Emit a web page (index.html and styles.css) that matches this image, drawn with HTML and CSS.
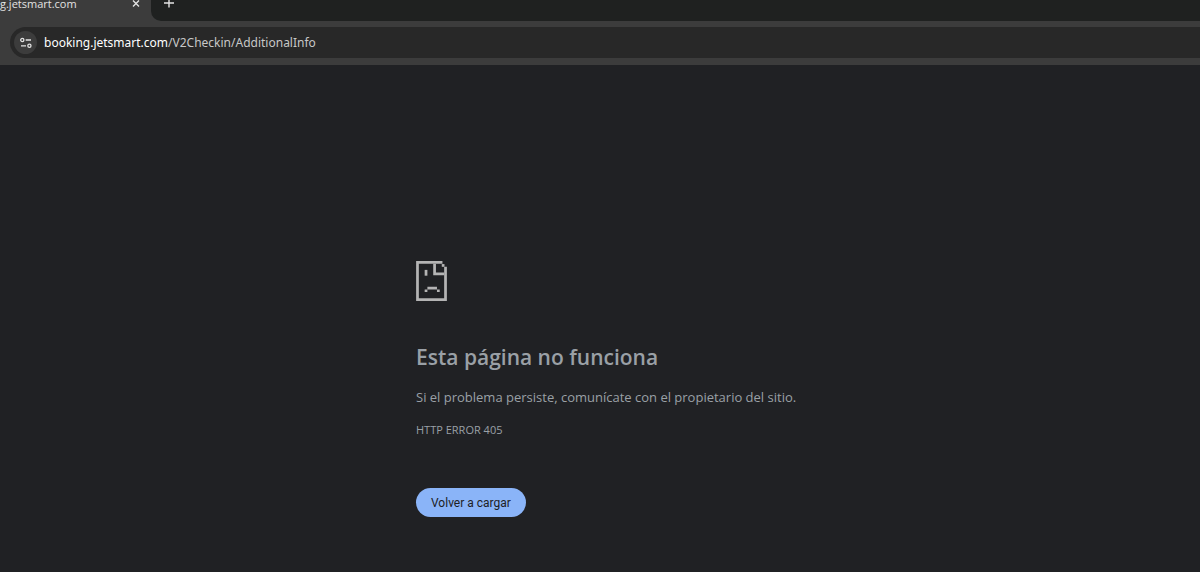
FILE: index.html
```html
<!DOCTYPE html>
<html lang="es">
<head>
  <meta charset="UTF-8">
  <meta name="viewport" content="width=device-width, initial-scale=1">
  <title>booking.jetsmart.com</title>
  <link rel="stylesheet" href="styles.css">
</head>
<body>

<header class="browser">
  <div class="tabs">
    <div class="tab">
      <span class="tab-title">g.jetsmart.com</span>
      <button class="tab-button" type="button" aria-label="Cerrar">
        <svg width="8" height="8" viewBox="0 0 8 8"><path d="M1 0.5 7 6.5M7 0.5 1 6.5"/></svg>
      </button>
    </div>
    <div class="strip">
      <button class="tab-button" type="button" aria-label="Nueva">
        <svg width="10" height="8" viewBox="0 0 10 8"><path d="M5 -1.5V7.5M0 3H10"/></svg>
      </button>
    </div>
  </div>
  <div class="toolbar">
    <div class="address">
      <button class="site-info" type="button" aria-label="Sitio">
        <svg width="12" height="12" viewBox="0 0 12 12">
          <circle cx="2.3" cy="3" r="1.6"/>
          <path d="M5.7 3H11M1 8.8H6"/>
          <circle cx="9.4" cy="8.8" r="1.6"/>
        </svg>
      </button>
      <a class="url" href="#"><span class="host">booking.jetsmart.com</span>/V2Checkin/AdditionalInfo</a>
    </div>
  </div>
</header>

<main class="error">
  <svg class="sad-page" width="31" height="40" viewBox="0 0 90 117">
    <path d="M0 0H77V8H8V109H82V17H90V117H0Z"/>
    <path d="M50 8H58V34H82V42H50Z"/>
    <path d="M75 9H83V17H75Z"/>
    <path d="M25 26H33V43H25Z"/>
    <path d="M33 75H61V83H33ZM25 83H33V91H25ZM61 83H69V91H61Z"/>
  </svg>
  <h1>Esta página no funciona</h1>
  <p>Si el problema persiste, comunícate con el propietario del sitio.</p>
  <div class="error-code">HTTP ERROR 405</div>
  <button class="reload" type="button">Volver a cargar</button>
</main>

</body>
</html>
```
FILE: styles.css
```css
* {
  box-sizing: border-box;
}
body {
  margin: 0;
  min-height: 100vh;
  background: #202124;
  color: #9aa0a6;
  font-family: "Segoe UI", "Open Sans", "Noto Sans", sans-serif;
}
button {
  border: none;
  cursor: pointer;
}
.browser {
  background: #3c3c3c;
}
.tabs {
  display: flex;
  height: 21px;
}
.tab {
  display: flex;
  justify-content: space-between;
  width: 151px;
  padding-right: 11px;
}
.tab-title {
  margin-top: -4px;
  font-size: 11px;
  line-height: 16px;
  color: #e3e3e3;
}
.tab-button {
  display: flex;
  align-items: center;
  height: 8px;
  padding: 0;
  background: none;
}
.tab-button svg {
  fill: none;
  stroke: #e3e3e3;
  stroke-width: 1.4;
  overflow: visible;
}
.strip {
  flex: 1;
  padding-left: 13px;
  background: #1f2120;
  border-bottom-left-radius: 10px;
}
.toolbar {
  padding: 6px 0 7px 10px;
}
.address {
  display: flex;
  align-items: center;
  gap: 7px;
  height: 31px;
  padding-left: 4px;
  background: #282828;
  border-radius: 16px 0 0 16px;
}
.site-info {
  display: flex;
  align-items: center;
  justify-content: center;
  width: 23px;
  height: 23px;
  padding: 0;
  background: #3c3c3c;
  border-radius: 50%;
}
.site-info svg {
  fill: none;
  stroke: #e3e3e3;
  stroke-width: 1.3;
}
.url {
  font-family: "Segoe UI", "Noto Sans", sans-serif;
  font-size: 12px;
  color: #c7c7c7;
  text-decoration: none;
}
.host {
  color: #fff;
}
.error {
  width: 66%;
  max-width: 600px;
  margin-left: 416px;
  padding-top: 196px;
}
.sad-page {
  display: block;
  fill: #b4b4b4;
}
h1 {
  margin: 41px 0 0;
  font-size: 21px;
  font-weight: 600;
  line-height: 30px;
}
p {
  margin: 15px 0 0;
  font-size: 13px;
  line-height: 20px;
}
.error-code {
  margin-top: 15px;
  font-size: 11px;
  line-height: 16px;
}
.reload {
  height: 29px;
  margin-top: 50px;
  padding: 0 15px;
  background: #8ab4f8;
  border-radius: 15px;
  font-family: Roboto, sans-serif;
  font-size: 12px;
  color: #202124;
}
```
